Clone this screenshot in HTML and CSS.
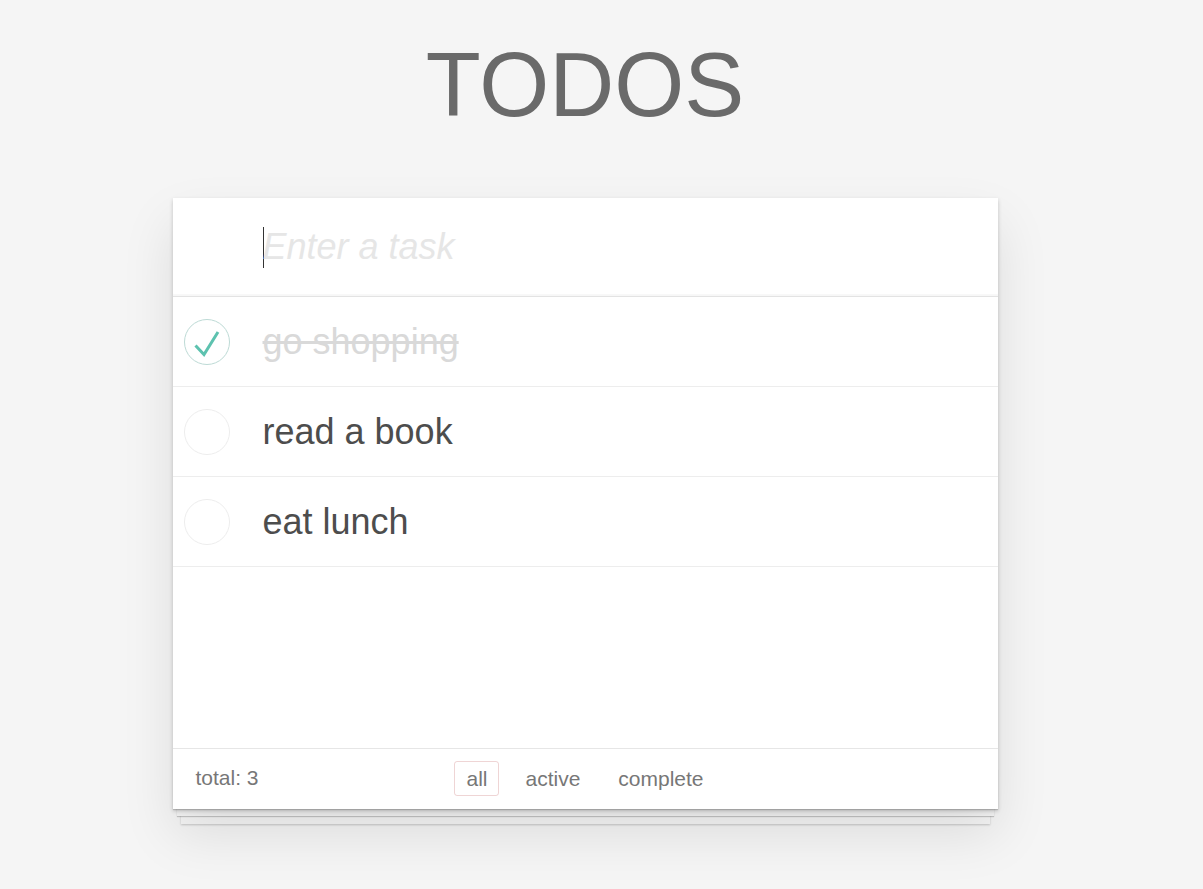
FILE: index.html
```html
<!DOCTYPE html>
<html lang="en">
<head>
<meta charset="utf-8">
<title>TODOS</title>
<link rel="stylesheet" href="styles.css">
</head>
<body>
<div class="page">
  <h1 class="title">TODOS</h1>
  <section class="card">
    <header class="entry">
      <span class="caret"></span>
      <input class="new-todo" type="text" placeholder="Enter a task">
    </header>
    <ul class="list">
      <li class="item done">
        <svg class="toggle" width="46" height="46" viewBox="0 0 46 46">
          <circle cx="23" cy="23" r="22.5" fill="none" stroke="#bddad5" stroke-width="1"/>
          <path d="M11.5 26.5 L20 35.5 L34 13" fill="none" stroke="#5dc2af" stroke-width="3"/>
        </svg>
        <span class="label">go shopping</span>
      </li>
      <li class="item">
        <svg class="toggle" width="46" height="46" viewBox="0 0 46 46">
          <circle cx="23" cy="23" r="22.5" fill="none" stroke="#ededed" stroke-width="1"/>
        </svg>
        <span class="label">read a book</span>
      </li>
      <li class="item">
        <svg class="toggle" width="46" height="46" viewBox="0 0 46 46">
          <circle cx="23" cy="23" r="22.5" fill="none" stroke="#ededed" stroke-width="1"/>
        </svg>
        <span class="label">eat lunch</span>
      </li>
    </ul>
    <footer class="footer">
      <span class="count">total: 3</span>
      <nav class="filters">
        <a class="filter selected">all</a>
        <a class="filter">active</a>
        <a class="filter">complete</a>
      </nav>
      <span></span>
    </footer>
  </section>
</div>
</body>
</html>
```

FILE: styles.css
```css
* { box-sizing: border-box; }

html, body {
  margin: 0;
  padding: 0;
}

body {
  background: #f5f5f5;
  font-family: "Liberation Sans", Arial, sans-serif;
  color: #4d4d4d;
}

.page {
  width: 1170px;
  min-height: 889px;
  padding-top: 40px;
}

.title {
  margin: 0;
  font-size: 90px;
  line-height: 90px;
  font-weight: 400;
  text-align: center;
  color: #6a6a6a;
}

.card {
  width: 825px;
  margin: 68px auto 0;
  background: #fff;
  box-shadow: 0 2px 4px rgba(0, 0, 0, 0.2), 0 25px 50px rgba(0, 0, 0, 0.1);
}

.entry {
  height: 99px;
  display: flex;
  align-items: center;
  padding-left: 90px;
  border-bottom: 1px solid #e3e3e3;
  box-shadow: inset 0 -2px 1px rgba(0, 0, 0, 0.03);
}

.caret {
  width: 1px;
  height: 41px;
  background: #333;
  flex: none;
  margin-right: -1px;
}

.new-todo {
  flex: 1;
  border: none;
  outline: none;
  background: transparent;
  padding: 0;
  font-family: "Liberation Sans", Arial, sans-serif;
  font-size: 36px;
  color: #4d4d4d;
  height: 50px;
}

.new-todo::placeholder {
  font-style: italic;
  color: #e6e6e6;
}

.list {
  list-style: none;
  margin: 0;
  padding: 0;
  height: 451px;
}

.item {
  height: 90px;
  display: flex;
  align-items: center;
  border-bottom: 1px solid #ededed;
  padding-left: 11px;
}

.toggle {
  flex: none;
  display: block;
}

.label {
  margin-left: 33px;
  font-size: 36px;
  line-height: 42px;
  color: #4d4d4d;
}

.item.done .label {
  color: #d9d9d9;
  text-decoration: line-through;
}

.footer {
  position: relative;
  height: 61px;
  border-top: 1px solid #e6e6e6;
  padding: 0 23px 2px 23px;
  display: grid;
  grid-template-columns: 1fr auto 1fr;
  align-items: center;
  font-size: 21px;
  color: #777;
}

.footer::before {
  content: "";
  position: absolute;
  left: 0;
  right: 0;
  bottom: 0;
  height: 40px;
  box-shadow:
    0 1px 1px rgba(0, 0, 0, 0.15),
    0 11px 0 -4px #f6f6f6,
    0 12px 1px -4px rgba(0, 0, 0, 0.2),
    0 23px 0 -8px #f6f6f6,
    0 24px 2px -8px rgba(0, 0, 0, 0.2);
  z-index: -1;
}

.count {
  line-height: 24px;
}

.filters {
  display: flex;
  gap: 14px;
}

.filter {
  display: block;
  padding: 5px 11px;
  line-height: 23px;
  border: 1px solid transparent;
  border-radius: 3px;
  color: #777;
}

.filter.selected {
  border-color: rgba(175, 47, 47, 0.2);
}
```
